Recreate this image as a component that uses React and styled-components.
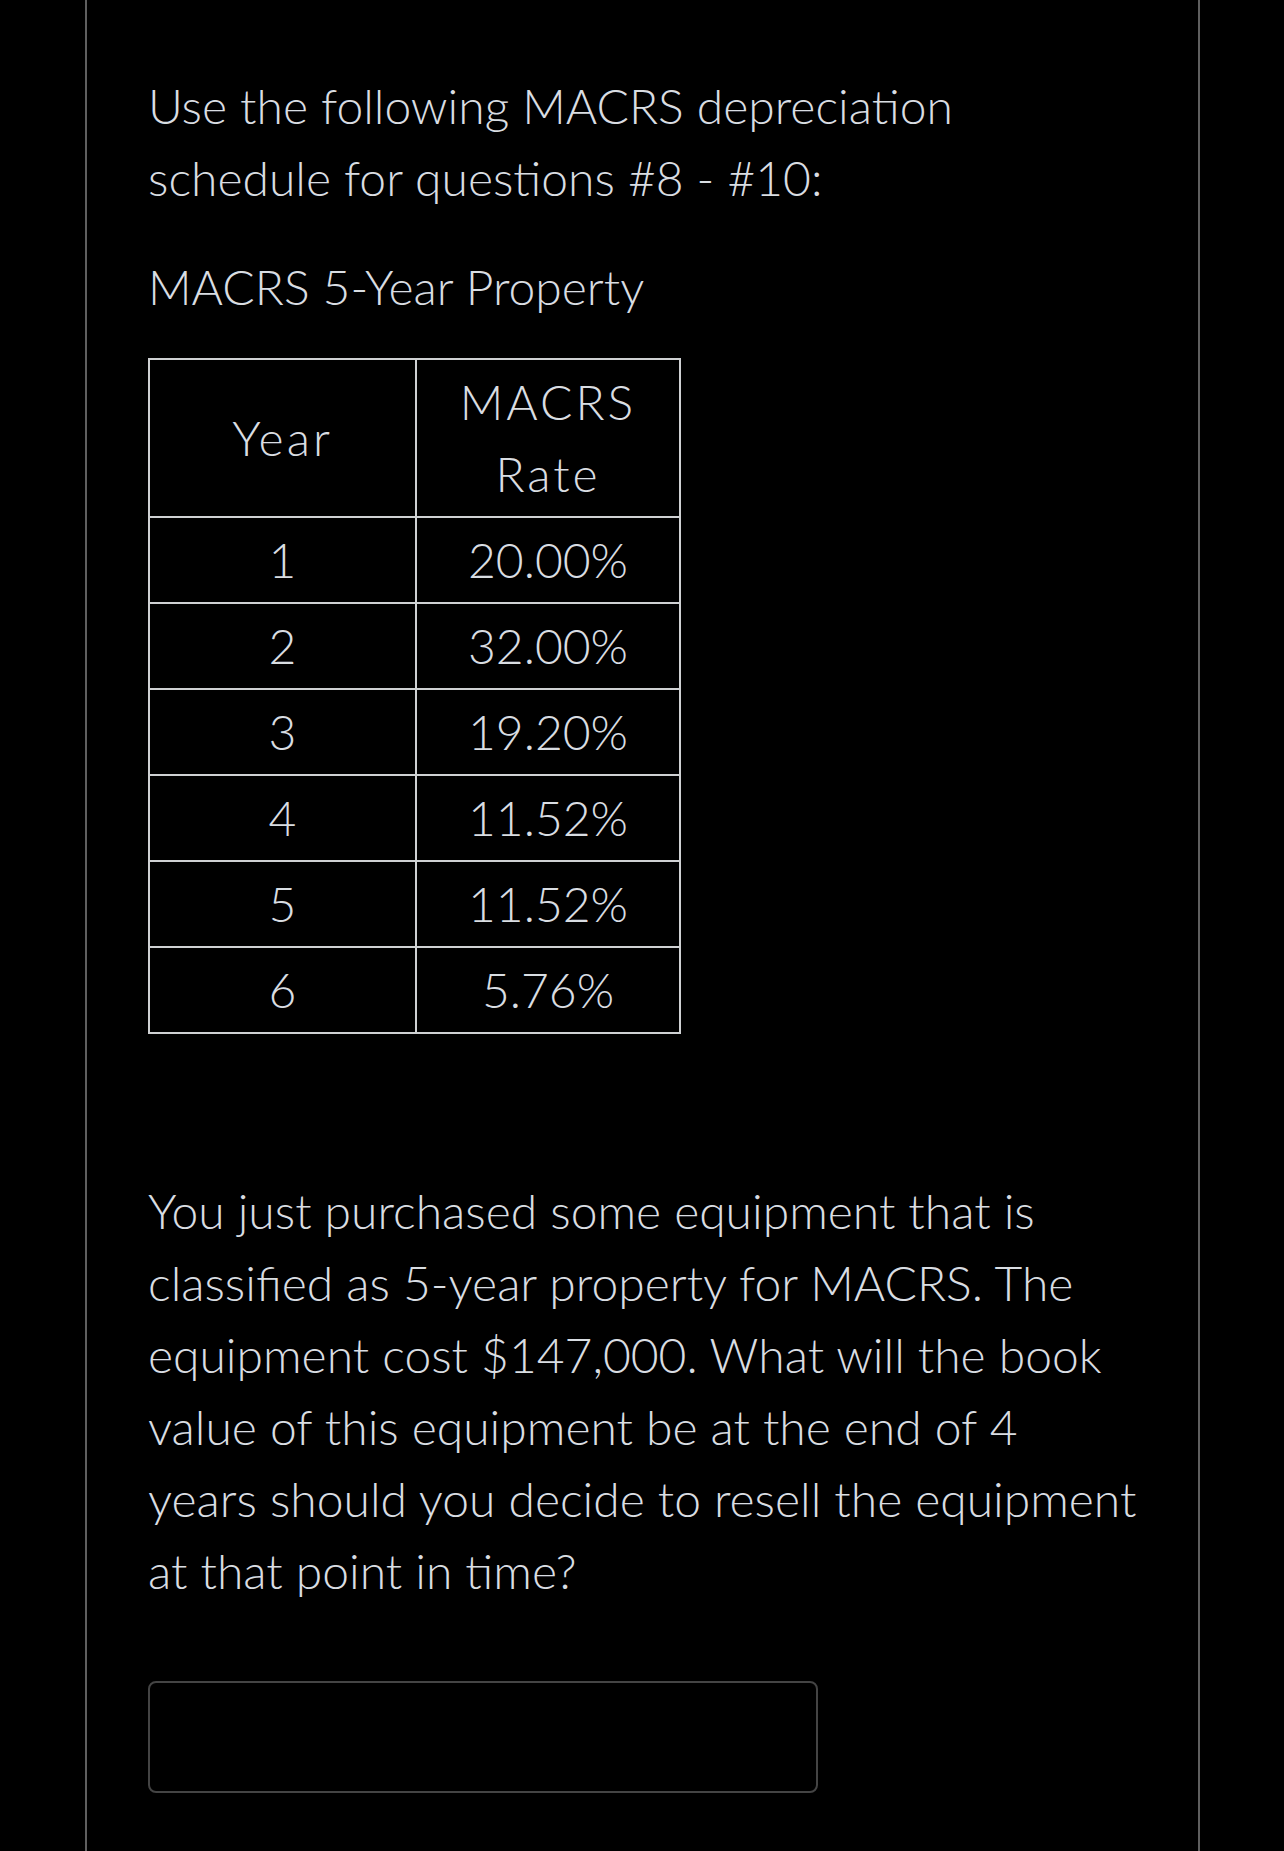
import React from "react";
import styled, { createGlobalStyle } from "styled-components";

const Global = createGlobalStyle`
  html, body { margin: 0; padding: 0; background: #000; }
  body { font-family: "Lato Light", Lato, "Open Sans", sans-serif; }
`;

const Page = styled.div`
  min-height: 1851px;
  background: #000;
  padding: 0 84px 0 85px;
`;

const Column = styled.main`
  min-height: 1851px;
  box-sizing: border-box;
  border-left: 2px solid #5f5f5f;
  border-right: 2px solid #5f5f5f;
  padding: 70px 40px 0 61px;
  color: #d9dde2;
  font-family: "Lato Light", Lato, "Open Sans", sans-serif;
  font-weight: 300;
  font-size: 48px;
  line-height: 72px;
`;

const Para = styled.p`
  margin: ${(p) => p.$m || "0"};
  max-width: ${(p) => p.$w || "none"};
`;

const Table = styled.table`
  border-collapse: collapse;
  margin-top: 35px;
  border: 2px solid #cfd1d3;
`;

const Cell = styled.td`
  border: 2px solid #cfd1d3;
  text-align: center;
  vertical-align: middle;
  width: ${(p) => p.$w}px;
  height: ${(p) => p.$h || 84}px;
  padding: 0;
  font-weight: 300;
  letter-spacing: ${(p) => (p.$head ? "3px" : "0")};
`;

const Answer = styled.div`
  margin-top: 74px;
  width: 670px;
  height: 112px;
  box-sizing: border-box;
  border: 2px solid #444;
  border-radius: 8px;
`;

const rows = [
  ["1", "20.00%"],
  ["2", "32.00%"],
  ["3", "19.20%"],
  ["4", "11.52%"],
  ["5", "11.52%"],
  ["6", "5.76%"],
];

export default function App() {
  return (
    <>
      <Global />
      <Page>
        <Column>
          <Para $w="900px">
            Use the following MACRS depreciation schedule for questions #8 - #10:
          </Para>
          <Para $m="37px 0 0">MACRS 5-Year Property</Para>
          <Table>
            <tbody>
              <tr>
                <Cell $w={265} $h={156} $head>Year</Cell>
                <Cell $w={262} $h={156} $head>
                  MACRS
                  <br />
                  Rate
                </Cell>
              </tr>
              {rows.map(([y, r]) => (
                <tr key={y}>
                  <Cell $w={265}>{y}</Cell>
                  <Cell $w={262}>{r}</Cell>
                </tr>
              ))}
            </tbody>
          </Table>
          <Para $m="141px 0 0">
            You just purchased some equipment that is classified as 5-year
            property for MACRS. The equipment cost $147,000. What will the book
            value of this equipment be at the end of 4
            <br />
            years should you decide to resell the equipment at that point in
            time?
          </Para>
          <Answer />
        </Column>
      </Page>
    </>
  );
}
